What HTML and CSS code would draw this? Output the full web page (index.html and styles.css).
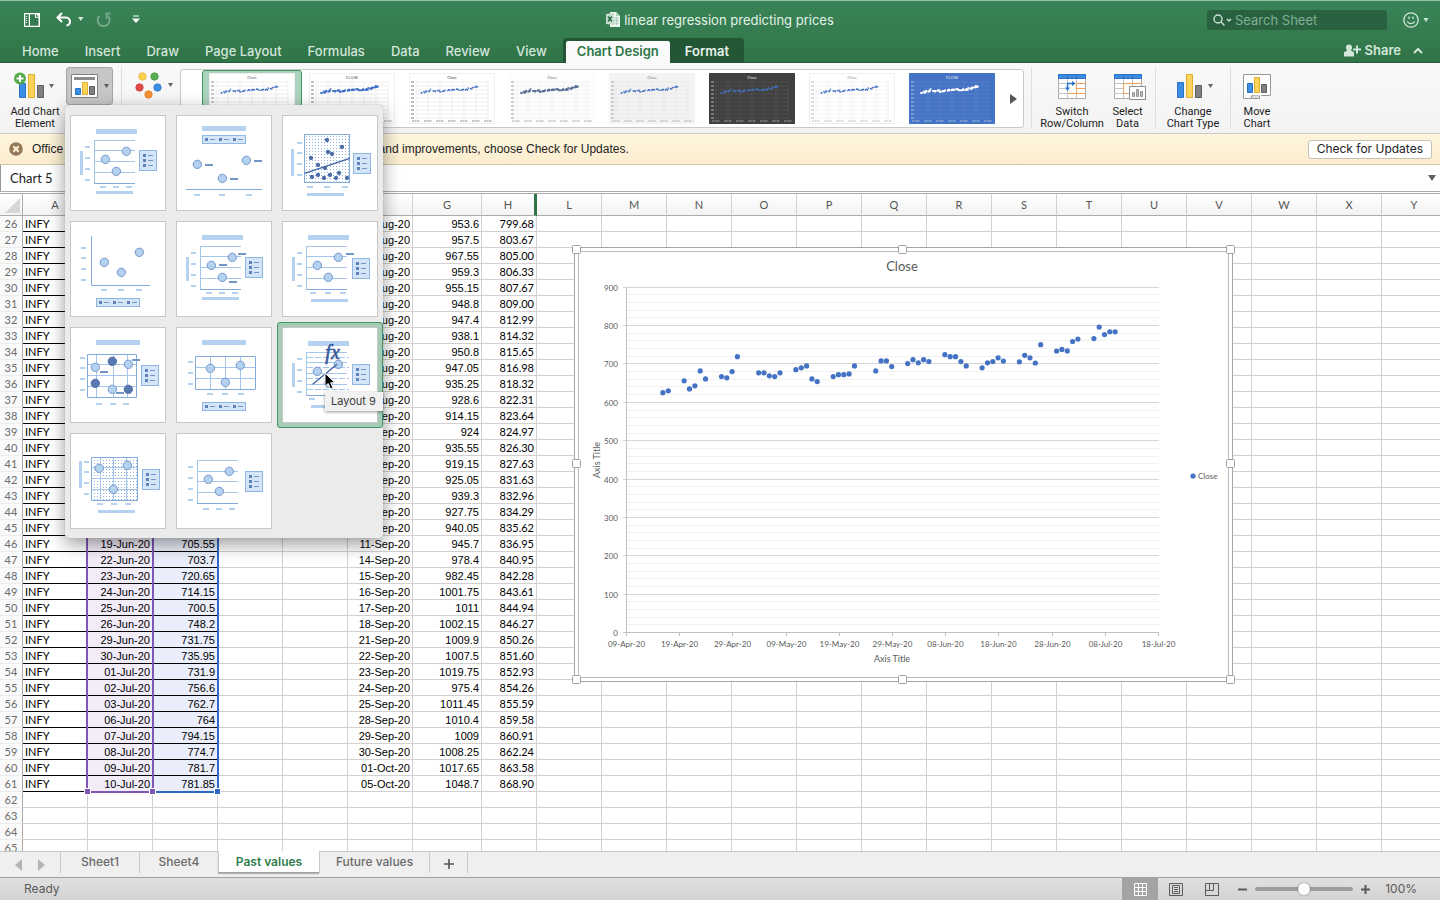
FILE: index.html
```html
<!DOCTYPE html>
<html lang="en">
<head>
<meta charset="utf-8">
<title>linear regression predicting prices</title>
<link rel="stylesheet" href="styles.css">
</head>
<body>
<div class="app">
  <header class="titlebar">
    <div class="quick">
      <button class="q-btn q-book" aria-label="File gallery"><svg width="16" height="14" viewBox="0 0 16 14"><path d="M0 0h16v14H0z" fill="#fff"/><path d="M1.3 1.3h3.5v11.4H1.3zM6 1.3h5v3.5h3.5v7.9H6z" fill="#347a4f"/><path d="M12 1l2.7 2.8H12z" fill="#347a4f"/><path d="M2.7 3v8" stroke="#fff" stroke-width="1" stroke-dasharray="1 1"/></svg></button>
      <button class="q-btn q-undo" aria-label="Undo"><svg width="28" height="16" viewBox="0 0 28 16"><path d="M6 1L1.500 5.500 6 10M2 5.500h8a4 4 0 0 1 4 4.200a4 4 0 0 1-3.500 3.800" fill="none" stroke="#fff" stroke-width="2"/><path d="M22 5h5.500l-2.750 4z" fill="#d6e7dc"/></svg></button>
      <button class="q-btn q-redo" aria-label="Repeat"><svg width="16" height="16" viewBox="0 0 16 16"><path d="M3.500 3.800A6 6 0 1 0 11.500 3.500" fill="none" stroke="#72a887" stroke-width="2"/><path d="M9.500 1.500h5M10.500 1v6" fill="none" stroke="#72a887" stroke-width="1.800"/></svg></button>
      <button class="q-btn" aria-label="Customize toolbar"><svg width="8" height="9" viewBox="0 0 8 9"><path d="M1 1h6" stroke="#bcd7c6" stroke-width="1.500"/><path d="M0 3.500h8L4 8z" fill="#fff"/></svg></button>
    </div>
    <h1 class="doc-title"><svg width="14" height="15" viewBox="0 0 14 15"><path d="M4 0h6l4 4v11H4z" fill="#eef6f1"/><path d="M10 0v4h4" fill="#b7d3c2"/><path d="M8 6h5M8 8.500h5M8 11h5M10.500 5v8" stroke="#9fc3af" stroke-width=".8"/><path d="M0 2l8-1v12l-8-1z" fill="#c5ddcf"/><path d="M2 4.500l3.800 5M5.800 4.500l-3.800 5" stroke="#28693f" stroke-width="1.400"/></svg>linear regression predicting prices</h1>
    <div class="title-right">
      <label class="search"><svg width="20" height="12" viewBox="0 0 20 12"><circle cx="5" cy="5" r="4" fill="none" stroke="#cfe2d7" stroke-width="1.400"/><path d="M8 8l3.500 3.500M14 5l2 2 2-2" fill="none" stroke="#cfe2d7" stroke-width="1.400"/></svg><input type="text" placeholder="Search Sheet" aria-label="Search Sheet"></label>
      <button class="q-btn" aria-label="Feedback"><svg width="26" height="16" viewBox="0 0 26 16"><circle cx="8" cy="8" r="7.200" fill="none" stroke="#d3e6db" stroke-width="1.300"/><path d="M4.300 9.500a3.900 3 0 0 0 7.400 0M6 4.500v2.500M10 4.500v2.500" fill="none" stroke="#d3e6db" stroke-width="1.300"/><path d="M20.500 6h5L23 10z" fill="#d3e6db"/></svg></button>
    </div>
  </header>

  <nav class="tabs">
    <button>Home</button><button>Insert</button><button>Draw</button><button>Page Layout</button><button>Formulas</button><button>Data</button><button>Review</button><button>View</button>
    <div class="context-tabs"><button class="active">Chart Design</button><button>Format</button></div>
    <div class="share-area">
      <button class="share"><svg width="17" height="13" viewBox="0 0 17 13"><path d="M5 .500a3 3 0 0 1 3 3c0 1.500-.6 2.400-1.200 3L10 8.200V12.500H0V8.200l3.200-1.700C2.600 5.900 2 5 2 3.500a3 3 0 0 1 3-3z" fill="#d3e6db"/><path d="M13 1.500v8M9 5.500h8" stroke="#d3e6db" stroke-width="2"/></svg>Share</button>
      <button class="q-btn" aria-label="Collapse ribbon"><svg width="10" height="7" viewBox="0 0 10 7"><path d="M1 6l4-4 4 4" fill="none" stroke="#d3e6db" stroke-width="2"/></svg></button>
    </div>
  </nav>

  <section class="ribbon" aria-label="Chart Design">
    <button class="cmd add-cmd">
      <svg width="42" height="32" viewBox="0 0 42 32"><path d="M5.500 11.500h6v14h-6z" fill="#3c8ee5" stroke="#2a73c4"/><path d="M14.500 2.500h6v23h-6z" fill="#fbd35b" stroke="#e0af2f"/><path d="M23.500 13.500h6v12h-6z" fill="#808080" stroke="#5e5e5e"/><circle cx="6" cy="6.500" r="6" fill="#58a94c"/><path d="M6 3v7M2.500 6.500h7" stroke="#fff" stroke-width="2"/><path d="M35 12h5l-2.500 4z" fill="#666"/></svg>
      <span>Add Chart<br>Element</span>
    </button>
    <div class="layout-picker">
      <button class="quick-layout" aria-label="Quick Layout" aria-expanded="true"><svg width="38" height="25" viewBox="0 0 38 25"><path d="M.5.500h26v23H.500z" fill="#fff" stroke="#808080"/><path d="M3 3h21v3H3z" fill="#8c8c8c"/><path d="M4.500 14.500h5v6h-5z" fill="#3c8ee5" stroke="#2a73c4"/><path d="M11.500 8.500h5v12h-5z" fill="#fbd35b" stroke="#e0af2f"/><path d="M18.500 12.500h5v8h-5z" fill="#808080" stroke="#5e5e5e"/><path d="M33 10h5l-2.500 4z" fill="#5c5c5c"/></svg></button>
      <div class="layout-menu" id="layoutMenu" role="menu" aria-label="Quick Layout"></div>
    </div>
    <button class="cmd color-cmd" aria-label="Change Colors"><svg width="38" height="27" viewBox="0 0 38 27"><g stroke-width=".8"><circle cx="7.500" cy="4.500" r="3.700" fill="#fbd14e" stroke="#e4b636"/><circle cx="19.500" cy="4.500" r="3.700" fill="#58ad50" stroke="#469a3f"/><circle cx="4.500" cy="15.500" r="3.700" fill="#e04e4c" stroke="#c93f3e"/><circle cx="22.500" cy="15.500" r="3.700" fill="#3c8ee5" stroke="#2b78cc"/><circle cx="13.500" cy="22.500" r="3.700" fill="#f59034" stroke="#df7b23"/></g><path d="M33 11h5l-2.500 4z" fill="#666"/></svg></button>
    <div class="gallery" id="gallery"></div>
    <div class="group">
      <button class="cmd"><svg width="28" height="26" viewBox="0 0 28 26"><path d="M.5.500h27v24H.500z" fill="#fff" stroke="#aaa"/><path d="M9.500 5v19.500M18.500 5v19.500M0 9.500h18M0 14.500h10M0 19.500h18" stroke="#c4c4c4"/><path d="M18.500 9.500H28M18.500 14.500H28M10 19.500h17.500M18.500 9v11" stroke="#f0a05a"/><path d="M.5.500h27v4H.500z" fill="#3c8ee5" stroke="#2a73c4"/><path d="M9.500 0v5M18.500 0v5" stroke="#2a73c4"/><path d="M8 9h8v8H8z" fill="#fff"/><path d="M9.500 15V9.500h5" fill="none" stroke="#2a73c4" stroke-width="1.500"/><path d="M14 7l3.500 2.500-3.500 2.500zM7 13.500h5l-2.500 3.500z" fill="#2a73c4"/></svg><span>Switch<br>Row/Column</span></button>
      <button class="cmd select-cmd"><svg width="32" height="26" viewBox="0 0 32 26"><path d="M.5.500h27v24H.500z" fill="#fff" stroke="#aaa"/><path d="M9.500 5v19.500M18.500 5v19.500M0 9.500h18M0 14.500h10M0 19.500h18" stroke="#c4c4c4"/><path d="M9.500 19.500v-10H28M9.500 19.500H16" fill="none" stroke="#f0a05a"/><path d="M.5.500h27v4H.500z" fill="#3c8ee5" stroke="#2a73c4"/><path d="M9.500 0v5M18.500 0v5" stroke="#2a73c4"/><path d="M15.500 12.500h16v13h-16z" fill="#fff" stroke="#8d8d8d"/><path d="M18.500 18.500h2v4h-2zM22.500 15.500h2v7h-2zM26.500 17.500h2v5h-2z" fill="#bbb" stroke="#999"/></svg><span>Select<br>Data</span></button>
    </div>
    <div class="group type-group">
      <button class="cmd"><svg width="36" height="26" viewBox="0 0 36 26"><path d="M.5 8.500h6v15h-6z" fill="#3c8ee5" stroke="#2a73c4"/><path d="M9.500.500h6v23h-6z" fill="#fbd35b" stroke="#e0af2f"/><path d="M18.500 11.500h6v12h-6z" fill="#808080" stroke="#5e5e5e"/><path d="M31 10h5l-2.500 4z" fill="#666"/></svg><span>Change<br>Chart Type</span></button>
    </div>
    <div class="group move-group">
      <button class="cmd"><svg width="28" height="26" viewBox="0 0 28 26"><path d="M8.500 21.500h8v3h-8z" fill="#ddd" stroke="#999"/><path d="M.5 21V.500h27v21H18M.500 21v3.500h8" fill="#fff" stroke="#999"/><path d="M4.500 9.500h5v9h-5z" fill="#3c8ee5" stroke="#2a73c4"/><path d="M11.500 3.500h5v15h-5z" fill="#fbd35b" stroke="#e0af2f"/><path d="M18.500 10.500h5v8h-5z" fill="#808080" stroke="#5e5e5e"/></svg><span>Move<br>Chart</span></button>
    </div>
  </section>

  <div class="notice">
    <button class="q-btn" aria-label="Dismiss"><svg width="14" height="14" viewBox="0 0 14 14"><circle cx="7" cy="7" r="6.800" fill="#927a58"/><path d="M4.300 4.300l5.400 5.400M9.700 4.300l-5.400 5.400" stroke="#fdf3da" stroke-width="2"/></svg></button>
    <p><span class="lead">Office Update</span>To keep up-to-date with security updates, fixes, and improvements, choose Check for Updates.</p>
    <button class="update">Check for Updates</button>
  </div>

  <div class="formula">
    <input class="name-box" type="text" value="Chart 5" aria-label="Name box">
    <input class="formula-input" type="text" aria-label="Formula bar">
    <button class="q-btn" aria-label="Expand formula bar"><svg width="8" height="6" viewBox="0 0 8 6"><path d="M0 0h8L4 6z" fill="#5f5f5f"/></svg></button>
  </div>

  <main class="sheet">
    <table class="cells" id="cells"></table>
    <div class="range range-x"></div>
    <div class="range range-y"></div>
    <i class="knob knob-a"></i><i class="knob knob-b"></i><i class="knob knob-c"></i>
    <div class="chart-object" id="chart"></div>
  </main>

  <footer class="sheetbar">
    <div class="arrows"><button aria-label="Previous sheet"><svg width="7" height="12" viewBox="0 0 7 12"><path d="M7 0v12L0 6z" fill="#b4b4b4"/></svg></button><button aria-label="Next sheet"><svg width="7" height="12" viewBox="0 0 7 12"><path d="M0 0v12l7-6z" fill="#b4b4b4"/></svg></button></div>
    <button class="sheet-tab">Sheet1</button><button class="sheet-tab">Sheet4</button><button class="sheet-tab current">Past values</button><button class="sheet-tab wide">Future values</button>
    <button class="sheet-tab add" aria-label="Add sheet"><svg width="10" height="10" viewBox="0 0 10 10"><path d="M5 0v10M0 5h10" stroke="#555" stroke-width="1.600"/></svg></button>
  </footer>

  <div class="status">
    <span class="ready">Ready</span>
    <button class="view on" aria-label="Normal view"><svg width="13" height="13" viewBox="0 0 13 13"><path d="M.5.500h12v12H.500zM.500 4.500h12M.500 8.500h12M4.500.500v12M8.500.500v12" fill="none" stroke="#fff"/></svg></button>
    <button class="view" aria-label="Page layout view"><svg width="14" height="13" viewBox="0 0 14 13"><path d="M.5.500h13v12H.500zM3.500 2.500h7v8h-7zM5 4.500h4M5 6.500h4M5 8.500h4" fill="none" stroke="#5b5b5b"/></svg></button>
    <button class="view" aria-label="Page break view"><svg width="14" height="13" viewBox="0 0 14 13"><path d="M.5.500h13v12H.500zM4.500.500v7M8.500.500v7M.500 7.500h8" fill="none" stroke="#5b5b5b"/></svg></button>
    <button class="zoom-btn" aria-label="Zoom out"><svg width="9" height="9" viewBox="0 0 9 9"><path d="M0 4.500h9" stroke="#5b5b5b" stroke-width="2"/></svg></button>
    <input class="zoom" type="range" min="0" max="100" value="50" aria-label="Zoom">
    <button class="zoom-btn" aria-label="Zoom in"><svg width="9" height="9" viewBox="0 0 9 9"><path d="M0 4.500h9M4.500 0v9" stroke="#5b5b5b" stroke-width="2"/></svg></button>
    <span class="percent">100%</span>
  </div>
</div>
<script src="script.js"></script>
</body>
</html>
```

FILE: styles.css
```css
* { box-sizing: border-box; }
body { margin: 0; font-family: Inter, "Liberation Sans", sans-serif; color: #262626; }
button { border: 0; background: none; padding: 0; margin: 0; font: inherit; color: inherit; }
svg { display: block; flex: none; }
.app { display: flex; flex-direction: column; height: 100vh; overflow: hidden; background: #fff; }

/* Title bar */
.titlebar { display: grid; grid-template-columns: 1fr auto 1fr; align-items: center; height: 38px; border-top: 1px solid #8fc3a7; background: linear-gradient(#398457, #347b4e); }
.quick { display: flex; align-items: center; padding-left: 24px; }
.q-book { margin-right: 16px; }
.q-undo { margin-right: 12px; }
.q-redo { margin-right: 20px; }
.doc-title { display: flex; align-items: center; gap: 4px; margin: 0; font-size: 13px; line-height: 16px; font-weight: 400; color: #e4f1e9; }
.title-right { display: flex; justify-content: flex-end; align-items: center; gap: 16px; padding-right: 11px; }
.search { display: flex; align-items: center; gap: 2px; width: 180px; height: 20px; padding: 0 6px; border-radius: 3px; background: #2a6241; }
.search input { flex: 1; min-width: 0; padding: 0; border: 0; background: none; font: 400 13px/16px Inter, sans-serif; color: #fff; }
.search input::placeholder { color: #7fb094; opacity: 1; }

/* Ribbon tabs */
.tabs { display: flex; align-items: stretch; gap: 26px; height: 25px; padding-left: 22px; border-bottom: 1px solid #266039; background: linear-gradient(#347b4e, #307347); font-size: 13px; line-height: 16px; font-weight: 500; color: #d3e6da; }
.tabs > button { padding-top: 2px; }
.context-tabs { display: flex; margin: 0 0 -1px -10px; padding: 3px 0 0 3px; border-radius: 4px 4px 0 0; background: #235634; font-weight: 600; color: #e8f2ec; }
.context-tabs button { padding: 0 15px 2px; }
.context-tabs .active { padding: 0 11px 2px; border-radius: 2px 2px 0 0; background: #fafafa; color: #2c7547; }
.share-area { display: flex; align-items: center; gap: 12px; margin-left: auto; padding-right: 17px; font-weight: 600; }
.share { display: flex; align-items: center; gap: 4px; }

/* Ribbon */
.ribbon { display: flex; align-items: flex-start; height: 71px; padding-top: 4px; border-bottom: 1px solid #c9c9c9; background: linear-gradient(#f9f9f9, #f3f3f3); }
.cmd { display: flex; flex-direction: column; align-items: center; font: 11px/12px Roboto, sans-serif; color: #222; }
.add-cmd { width: 66px; gap: 2px; padding: 5px 0 0 4px; }
.layout-picker { position: relative; width: 56px; height: 62px; border-right: 1px solid #dedede; }
.quick-layout { display: flex; justify-content: center; align-items: center; width: 47px; height: 38px; padding-left: 1px; border: 1px solid #a4a4a4; border-radius: 3px; background: #c6c6c6; }
.color-cmd { width: 58px; padding: 5px 0 0 5px; }
.gallery { display: flex; align-items: center; gap: 14px; height: 59px; margin: 2px 7px 0 0; padding: 0 6px 0 28px; border: 1px solid #c9c9c9; border-radius: 3px; background: #fff; }
.gallery .more { margin-left: 1px; }
.style-item { position: relative; width: 86px; height: 51px; }
.style-item svg { position: relative; }
.style-item.selected::before { content: ""; position: absolute; inset: -3px -7px; border: 1px solid #3f9864; border-radius: 3px; background: #abd2bb; }
.tiny { font: 4px Lato, sans-serif; text-anchor: middle; }
.group { display: flex; align-items: flex-start; height: 62px; border-left: 1px solid #dedede; padding: 7px 3px 0 9px; }
.group .cmd { width: 62px; gap: 6px; }
.group .select-cmd { width: 49px; }
.group .select-cmd svg { margin-left: 4px; }
.type-group { padding: 7px 6px 0; }
.type-group svg { margin-left: 4px; }
.move-group { padding: 7px 0 0; }
.move-group .cmd { width: 52px; }

/* Quick layout menu */
.layout-menu { position: absolute; z-index: 10; left: -1px; top: 38px; display: grid; grid-template-columns: repeat(3, 96px); gap: 10px; width: 318px; padding: 10px 5px 9px; border-radius: 4px; background: #ebebeb; box-shadow: 0 0 1px #8d8d8d, 0 6px 18px rgba(0, 0, 0, .4); }
.layout-option { position: relative; width: 96px; height: 96px; }
.thumb { position: relative; outline: 1px solid #c7c7c7; outline-offset: -1px; background: #fff; }
.layout-option.hover::before { content: ""; position: absolute; inset: -5px; border: 1px solid #3f9864; border-radius: 3px; background: #a5cab6; }
.fx { font: italic 60px "Liberation Serif", serif; fill: #3a5b9c; stroke: #3a5b9c; stroke-width: 2px; }
.cursor { position: absolute; z-index: 3; left: 42px; top: 45px; }
.tooltip { position: absolute; z-index: 2; left: 43px; top: 65px; width: 58px; padding: 2px 0 2px 6px; background: #f1f1f1; box-shadow: 0 1px 3px rgba(0, 0, 0, .4); font-size: 11px; line-height: 15px; color: #3b3b3b; text-align: left; white-space: nowrap; }

/* Message bar */
.notice { display: flex; align-items: center; gap: 9px; height: 31px; padding: 0 8px 0 9px; border-bottom: 1px solid #cfc5ac; background: linear-gradient(#fef5dd, #fbeecf); }
.notice p { flex: 1; margin: 0; font: 12px/16px "Liberation Sans", sans-serif; color: #222; white-space: nowrap; }
.lead { margin-right: 20px; }
.update { height: 19px; padding: 0 8px; border: 1px solid #c4c0b4; border-radius: 3px; background: #fff; font-size: 12px; line-height: 16px; color: #222; }

/* Formula bar */
.formula { display: flex; align-items: center; height: 29px; padding-right: 4px; border-bottom: 3px double #adadad; }
.formula input { border: 0; padding: 0; height: 26px; background: none; font: 13px/16px Lato, sans-serif; color: #222; }
.formula .name-box { width: 110px; padding-left: 9px; border-left: 1px solid #999; }
.formula .formula-input { flex: 1; }

/* Worksheet */
.sheet { position: relative; flex: 1; min-height: 0; overflow: hidden; }
.cells { table-layout: fixed; width: 1447px; border-collapse: separate; border-spacing: 0; font: 11px/14px Lato, sans-serif; color: #000; }
.cells th, .cells td { height: 16px; padding: 1px 3px 0 2px; border-right: 1px solid #d0d0d0; border-bottom: 1px solid #d0d0d0; line-height: 14px; overflow: hidden; white-space: nowrap; }
.cells th { font-weight: 400; color: #6a6a6a; text-align: center; background: #fafafa; }
.cells thead th { height: 22px; padding: 0; border-bottom-color: #ababab; background: linear-gradient(#fff, #f3f3f3); color: #555; }
.cells tbody th { padding: 1px 0 0; border-right-color: #ababab; border-bottom-color: #ececec; }
.cells thead th.gap { border-right: 3px solid #2f7446; }
.cells thead th.corner { border-right-color: #ababab; }
.corner svg { margin: 1px 0 0 5px; }
.cells td.name { border-bottom-color: #000; }
.cells td.arial { padding-right: 2px; font: 11px/14px "Liberation Sans", Arial, sans-serif; text-align: right; }
.cells td.calc { padding-right: 2px; text-align: right; }
.cells td.xs { border-bottom-color: #000; background: #f2ecf8; }
.cells td.ys { border-bottom-color: #000; background: #e9eefa; }
.range { position: absolute; top: 22px; height: 577px; border-style: solid; border-width: 0 2px 2px; }
.range-x { left: 86px; width: 68px; border-color: #7f57b4; }
.range-y { left: 154px; width: 65px; border-color: #2f67c4; border-left: 0; }
.knob { position: absolute; top: 594px; width: 7px; height: 7px; border: 1px solid #fff; background: #7f57b4; }
.knob-a { left: 84px; }
.knob-b { left: 149px; }
.knob-c { left: 214px; background: #2f67c4; }

/* Chart */
.chart-object { position: absolute; left: 570px; top: 49px; }
.c-text { font: 8px Lato, sans-serif; fill: #595959; }
.c-axis { font-size: 9px; }
.c-title { font-size: 13px; }

/* Sheet tabs */
.sheetbar { display: flex; height: 26px; border-top: 1px solid #c6c6c6; background: #efefef; font-size: 12px; line-height: 16px; font-weight: 500; color: #6b6b6b; }
.arrows { display: flex; align-items: center; gap: 16px; width: 60px; padding: 0 0 0 15px; }
.sheet-tab { width: 79px; height: 21px; padding-bottom: 2px; border-left: 1px solid #c9c9c9; }
.sheet-tab.wide { width: 110px; }
.sheet-tab.current { width: 101px; height: 22px; margin-top: -1px; padding: 0; border-bottom: 1px solid #a2a2a2; background: #fff; color: #2f7d4d; font-weight: 600; box-shadow: 0 1px 1px rgba(0, 0, 0, .25); }
.sheet-tab.add { display: flex; align-items: center; justify-content: center; width: 39px; padding: 3px 0 0; border-right: 1px solid #c9c9c9; }

/* Status bar */
.status { display: flex; align-items: center; height: 23px; padding-right: 23px; border-top: 1px solid #a0a0a0; background: linear-gradient(#e0e0e0, #d3d3d3); font-size: 12px; line-height: 16px; color: #5a5a5a; }
.ready { flex: 1; padding-left: 24px; }
.view { display: flex; align-items: center; justify-content: center; width: 36px; height: 22px; }
.view.on { background: #a3a3a3; }
.zoom-btn { width: 9px; margin: 0 8px; }
.zoom { -webkit-appearance: none; appearance: none; width: 98px; height: 14px; margin: 0; background: none; }
.zoom::-webkit-slider-runnable-track { height: 4px; border-radius: 2px; background: #9d9d9d; }
.zoom::-webkit-slider-thumb { -webkit-appearance: none; width: 12px; height: 12px; margin-top: -4px; border-radius: 50%; background: #fff; box-shadow: 0 0 2px rgba(0, 0, 0, .5); }
.percent { width: 39px; text-align: right; }
```

FILE: script.js
```js
/* Closing prices: [days after 9 April, price] */
const closes = [[7,623],[8,628],[11,654],[12,633],[13,641],[14,680],[15,659],[18,665],[19,662],[20,678],[21,717],[25,675],[26,675],[27,667],[28,665],[29,675],[32,683],[33,688],[34,693],[35,659],[36,652],[39,665],[40,670],[41,670],[42,672],[43,693],[47,680],[48,706],[49,706],[50,691],[53,699],[54,709],[55,701],[56,709],[57,704],[60,722],[61,717],[62,717],[63,704],[64,693],[67,688],[68,701],[69,704],[70,714],[71,705.55],[74,703.7],[75,720.65],[76,714.15],[77,700.5],[78,748.2],[81,731.75],[82,735.95],[83,731.9],[84,756.6],[85,762.7],[88,764],[89,794.15],[90,774.7],[91,781.7],[92,781.85]];

/* Worksheet */
const letters = ['A','B','C','D','E','F','G','H','L','M','N','O','P','Q','R','S','T','U','V','W','X','Y'];
const dates = '14-Aug 17-Aug 18-Aug 19-Aug 20-Aug 21-Aug 24-Aug 25-Aug 26-Aug 27-Aug 28-Aug 31-Aug 01-Sep 02-Sep 03-Sep 04-Sep 07-Sep 08-Sep 09-Sep 10-Sep 11-Sep 14-Sep 15-Sep 16-Sep 17-Sep 18-Sep 21-Sep 22-Sep 23-Sep 24-Sep 25-Sep 28-Sep 29-Sep 30-Sep 01-Oct 05-Oct'.split(' ');
const actual = '953.6 957.5 967.55 959.3 955.15 948.8 947.4 938.1 950.8 947.05 935.25 928.6 914.15 924 935.55 919.15 925.05 939.3 927.75 940.05 945.7 978.4 982.45 1001.75 1011 1002.15 1009.9 1007.5 1019.75 975.4 1011.45 1010.4 1009 1008.25 1017.65 1048.7'.split(' ');
const forecast = '799.68 803.67 805.00 806.33 807.67 809.00 812.99 814.32 815.65 816.98 818.32 822.31 823.64 824.97 826.30 827.63 831.63 832.96 834.29 835.62 836.95 840.95 842.28 843.61 844.94 846.27 850.26 851.60 852.93 854.26 855.59 859.58 860.91 862.24 863.58 868.90'.split(' ');
const xs = '19-Jun 22-Jun 23-Jun 24-Jun 25-Jun 26-Jun 29-Jun 30-Jun 01-Jul 02-Jul 03-Jul 06-Jul 07-Jul 08-Jul 09-Jul 10-Jul'.split(' ');
const ys = '705.55 703.7 720.65 714.15 700.5 748.2 731.75 735.95 731.9 756.6 762.7 764 794.15 774.7 781.7 781.85'.split(' ');
const widthOf = { G: 69, H: 55 };
let html = '<colgroup><col style="width:23px">' + letters.map(l => `<col style="width:${widthOf[l] || 65}px">`).join('') + '</colgroup>';
html += '<thead><tr><th class="corner"><svg width="15" height="15"><path d="M15 0v15H0z" fill="#d6d6d6"/></svg></th>' + letters.map(l => `<th scope="col"${l === 'H' ? ' class="gap"' : ''}>${l}</th>`).join('') + '</tr></thead><tbody>';
for (let r = 26; r <= 65; r++) {
  html += `<tr><th scope="row">${r}</th>`;
  const i = r - 26, filled = r <= 61;
  for (const l of letters) {
    let cls = '', text = '';
    if (filled) {
      if (l === 'A') { cls = 'name'; text = 'INFY'; }
      if (l === 'B') { cls = 'arial xs'; text = r > 45 ? xs[r - 46] + '-20' : ''; }
      if (l === 'C') { cls = 'arial ys'; text = r > 45 ? ys[r - 46] : ''; }
      if (l === 'F') { cls = 'arial'; text = dates[i] + '-20'; }
      if (l === 'G') { cls = 'arial'; text = actual[i]; }
      if (l === 'H') { cls = 'calc'; text = forecast[i]; }
    }
    html += `<td class="${cls}">${text}</td>`;
  }
  html += '</tr>';
}
document.getElementById('cells').innerHTML = html + '</tbody>';

/* Scatter chart */
let c = '<svg width="667" height="443" viewBox="570 243 667 443">';
c += '<path d="M574.5 247.500h658v434h-658z" fill="#fff" stroke="#a6a6a6"/><path d="M578.5 251.500h650v426h-650z" fill="#fff" stroke="#bdbdbd"/>';
c += '<text class="c-text c-title" x="902" y="271" text-anchor="middle">Close</text>';
for (let v = 0; v <= 900; v += 20) {
  const y = Math.round(632 - v * .3836) + .5, major = v % 100 === 0;
  c += `<path d="M${major ? 623 : 627} ${y}H1159" stroke="${v === 0 ? '#bfbfbf' : major ? '#d6d6d6' : '#f0f0f0'}"/>`;
  if (major) c += `<text class="c-text" x="618" y="${y + 3}" text-anchor="end">${v}</text>`;
}
c += '<path d="M626.5 287V633" stroke="#bfbfbf"/>';
['09-Apr-20','19-Apr-20','29-Apr-20','09-May-20','19-May-20','29-May-20','08-Jun-20','18-Jun-20','28-Jun-20','08-Jul-20','18-Jul-20'].forEach((d, i) => {
  const x = Math.round(626 + i * 53.2) + .5;
  c += `<path d="M${x} 632v4" stroke="#bfbfbf"/><text class="c-text" x="${x}" y="647" text-anchor="middle">${d}</text>`;
});
c += '<text class="c-text c-axis" x="892" y="662" text-anchor="middle">Axis Title</text><text class="c-text c-axis" transform="translate(600 460) rotate(-90)" text-anchor="middle">Axis Title</text>';
c += closes.map(([d, p]) => `<circle cx="${(625.7 + d * 5.32).toFixed(1)}" cy="${(631.7 - p * .3836).toFixed(1)}" r="2.600" fill="#4472c4"/>`).join('');
c += '<circle cx="1193" cy="476" r="2.600" fill="#4472c4"/><text class="c-text" x="1198" y="479">Close</text>';
for (const [x, y] of [[576,249],[902,249],[1230,249],[576,463],[1230,463],[576,679],[902,679],[1230,679]])
  c += `<rect x="${x - 3.5}" y="${y - 3.5}" width="8" height="8" rx="1" fill="#fff" stroke="#a0a0a0"/>`;
document.getElementById('chart').innerHTML = c + '</svg>';

/* Chart style gallery */
const styles = [
  { bg: '#fff', ink: '#4472c4', text: '#666', grid: '#e6e6e6', title: 'Close', sel: true },
  { bg: '#fff', ink: '#4472c4', text: '#555', grid: '#e6e6e6', title: 'CLOSE', big: true },
  { bg: '#fff', ink: '#4472c4', text: '#444', grid: '#e6e6e6', title: 'Close' },
  { bg: '#fdfdfd', ink: '#5b7099', text: '#777', grid: '#ececec', title: 'Close', big: true },
  { bg: '#f3f3f3', ink: '#4472c4', text: '#888', grid: '#e2e2e2', title: 'Close' },
  { bg: '#404040', ink: '#4472c4', text: '#e0e0e0', grid: '#575757', title: 'Close' },
  { bg: '#fff', ink: '#4472c4', text: '#999', grid: '#e9e9e9', title: 'Close' },
  { bg: '#4472c4', ink: '#fff', text: '#e4ebf7', grid: '#6288cf', title: 'CLOSE', big: true }
];
document.getElementById('gallery').innerHTML = styles.map(s => {
  let g = `<svg width="86" height="51" viewBox="0 0 86 51"><path d="M.5.500h85v50H.500z" fill="${s.bg}" stroke="${s.bg === '#fff' ? '#f0f0f0' : s.bg}"/>`;
  g += `<text class="tiny" x="43" y="5.500" fill="${s.text}">${s.title}</text>`;
  for (let i = 0; i < 10; i++) g += `<path d="M7 ${9 + i * 4}H79" stroke="${s.grid}" stroke-width=".6"/><path d="M2 ${9 + i * 4}h3" stroke="${s.text}" stroke-width="1.200" opacity=".6"/>`;
  for (let i = 0; i < 7; i++) g += `<path d="M${7 + i * 12} 9v36" stroke="${s.grid}" stroke-width=".6"/><path d="M${3 + i * 12} 48h8" stroke="${s.text}" stroke-width="1.200" stroke-dasharray="2 .5" opacity=".6"/>`;
  g += closes.map(([d, p]) => `<circle cx="${(7.5 + d * .665).toFixed(1)}" cy="${(45 - p * .04).toFixed(1)}" r="${s.big ? 1.1 : .8}" fill="${s.ink}"/>`).join('');
  return `<button class="style-item${s.sel ? ' selected' : ''}" aria-label="Chart style">${g}</svg></button>`;
}).join('') + '<button class="more" aria-label="More styles"><svg width="7" height="10" viewBox="0 0 7 10"><path d="M0 0v10l7-5z" fill="#555"/></svg></button>';

/* Quick layout thumbnails, drawn on a 288-unit square */
const pale = '#b4d1f0', line = '#a5c6ec', edge = '#82aada', mid = '#7396c9', dark = '#4c6ca8';
const box = (x, y, w, h, f = pale) => `<rect x="${x}" y="${y}" width="${w}" height="${h}" fill="${f}"/>`;
const many = (list, f) => list.map(p => f(...p)).join('');
const tickL = (x, ys) => ys.map(y => box(x, y, 15, 6)).join('');
const tickB = (y, xs) => xs.map(x => box(x, y, 18, 6)).join('');
const path = (d, s = line) => `<path d="${d}" fill="none" stroke="${s}" stroke-width="3"/>`;
const ball = (x, y) => `<circle cx="${x}" cy="${y}" r="12.500" fill="${pale}" stroke="${mid}" stroke-width="3"/>`;
const deep = (x, y) => `<circle cx="${x}" cy="${y}" r="12.500" fill="#5878b2" stroke="${dark}" stroke-width="3"/>`;
const dash = (x, y) => box(x, y, 24, 6, mid);
const frame = (x, y, w, h) => `<rect x="${x}" y="${y}" width="${w}" height="${h}" fill="#d3e5f7" stroke="#8fb5e2" stroke-width="3"/>`;
const legendV = (x, y) => frame(x + 1.5, y + 1.5, 51, 60) + [12, 27, 42].map(d => box(x + 12, y + d, 9, 9, '#5f82ba') + box(x + 27, y + d + 3, 15, 3, mid)).join('');
const legendH = (x, y) => frame(x + 1.5, y + 1.5, 129, 24) + [9, 51, 93].map(d => box(x + d, y + 9, 9, 9, '#5f82ba') + box(x + d + 15, y + 12, 15, 3, mid)).join('');
const dots = (x, y, w, h) => `<rect x="${x}" y="${y}" width="${w}" height="${h}" fill="url(#dots)"/>`;
const axes = path('M73.5 76.500H195M73.500 106.500H195M73.500 139.500H195M73.500 172.500H195M73.500 75V205') + path('M72 205.500H195', edge);
const side = box(30, 108, 9, 72) + tickL(45, [93, 126, 159, 192]);
const trio = many([[106, 133], [169, 109], [139, 169]], ball);
const top1 = box(78, 42, 123, 15), top2 = box(78, 39, 132, 15);
const thumbs = [
  top1 + side + axes + trio + tickB(213, [90, 129, 168]) + box(78, 228, 111, 9) + legendV(207, 105),
  box(78, 33, 132, 15) + legendH(78, 60) + many([[64, 148], [211, 136], [139, 190]], ball) + many([[87, 147], [234, 135], [162, 189]], dash) + path('M30 223.500H258', edge) + tickB(237, [54, 129, 210]),
  box(27, 102, 9, 81) + tickL(45, [81, 111, 144, 177]) + dots(70, 60, 132, 140) + '<rect x="67.500" y="58.500" width="135" height="144" fill="none" stroke="#82aada" stroke-width="3"/><path d="M68 175L203 130" stroke="#3f62a2" stroke-width="4"/>' + many([[135,75],[180,96],[138,111],[150,117],[87,129],[108,150],[129,159],[171,174],[90,186],[108,180],[126,189],[144,180],[162,189],[195,189]], (x, y) => `<circle cx="${x}" cy="${y}" r="6.500" fill="${dark}"/>`) + tickB(213, [75, 126, 180]) + box(75, 234, 111, 9) + legendV(213, 114),
  tickL(33, [78, 108, 141, 174]) + path('M64.5 45V193.500H240', edge) + many([[103, 124], [208, 94], [154, 154]], ball) + tickB(204, [93, 144, 198]) + legendH(78, 231),
  top1 + side + axes + trio + many([[129, 129], [186, 96], [159, 180]], dash) + tickB(213, [90, 129, 168]) + box(78, 228, 111, 9) + legendV(207, 108),
  top1 + side + axes + trio + dash(192, 96) + tickB(213, [84, 129, 174]) + box(87, 234, 111, 9) + legendV(210, 111),
  top2 + tickL(30, [90, 120, 153, 186]) + path('M79.5 82V212M130.500 82V212M172.500 82V212M52 112.500H200M52 145.500H200M52 178.500H200') + path('M52.5 82.500H199.500V211.500H52.500z', edge) + many([[90, 132], [186, 96], [138, 195]], dash) + many([[76, 121], [175, 112], [127, 187]], ball) + many([[127, 103], [76, 169], [175, 187]], deep) + tickB(228, [78, 120, 159]) + legendV(213, 114),
  top2 + tickL(36, [102, 135, 168]) + path('M103.5 88V187M148.500 88V187M193.500 88V187M58 121.500H239M58 154.500H239') + path('M58.5 88.500H238.500V187.500H58.500z', edge) + many([[103, 124], [193, 115], [148, 166]], ball) + tickB(198, [93, 138, 186]) + legendH(78, 225),
  top1 + side + axes + '<path d="M75 91.500H201M75 121.500H201M75 154.500H201M75 187.500H201" stroke="#a5c6ec" stroke-width="3" stroke-dasharray="18 6"/>' + many([[106, 133], [169, 112], [139, 169]], ball) + '<path d="M92 172L165 112" stroke="#3f62a2" stroke-width="4"/><text class="fx" x="130" y="96">fx</text>' + tickB(213, [81, 129, 174]) + box(87, 234, 111, 9) + legendV(210, 111),
  box(27, 84, 9, 81) + tickL(42, [84, 114, 147, 180]) + dots(66, 76, 136, 126) + path('M91.5 73V203M130.500 73V203M169.500 73V203M64 103.500H203M64 136.500H203M64 169.500H203') + path('M64.5 73.500H202.500V202.500H64.500z', edge) + many([[88, 106], [172, 97], [130, 169]], ball) + tickB(210, [81, 123, 165]) + box(84, 231, 111, 9) + legendV(216, 108),
  tickL(36, [99, 132, 165, 198]) + path('M64.5 82.500H186M64.500 115.500H186M64.500 145.500H186M64.500 178.500H186M64.500 81V211') + path('M63 211.500H186', edge) + many([[97, 139], [160, 115], [130, 175]], ball) + tickB(225, [81, 120, 159]) + legendV(207, 114)
];
const defs = '<defs><pattern id="dots" width="9" height="9" patternUnits="userSpaceOnUse"><rect width="3" height="3" fill="#8fb5e2"/></pattern></defs>';
const pointer = '<svg class="cursor" width="13" height="19" viewBox="0 0 13 19"><path d="M1 1v13.500l3.200-3 2.300 5.500 2.500-1-2.300-5.300H11z" fill="#000" stroke="#fff"/></svg>';
document.getElementById('layoutMenu').innerHTML = thumbs.map((t, i) =>
  `<button class="layout-option${i === 8 ? ' hover' : ''}" role="menuitem" aria-label="Layout ${i + 1}"><svg class="thumb" width="96" height="96" viewBox="0 0 288 288">${i === 2 ? defs : ''}${t}</svg>${i === 8 ? pointer + '<span class="tooltip">Layout 9</span>' : ''}</button>`).join('');
```
